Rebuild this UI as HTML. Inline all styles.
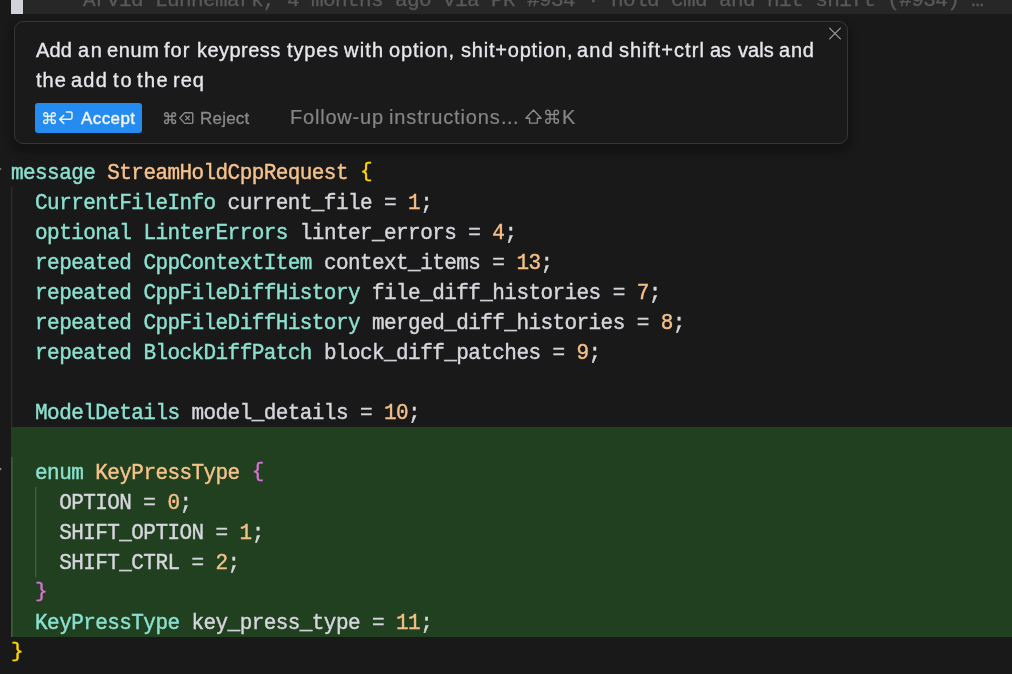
<!DOCTYPE html>
<html>
<head>
<meta charset="utf-8">
<style>
html,body{margin:0;padding:0;}
body{width:1012px;height:674px;overflow:hidden;background:#191919;position:relative;-webkit-font-smoothing:antialiased;font-family:"Liberation Sans",sans-serif;}
.abs{position:absolute;}
#band{left:11px;top:0;width:1001px;height:14px;background:#272727;}
#cursor{left:11px;top:0;width:12px;height:14px;background:#d2d2da;}
#blame{will-change:transform;left:83px;top:-11.4px;font-family:"Liberation Mono",monospace;font-size:21px;letter-spacing:-0.6px;-webkit-text-stroke:0.3px;line-height:24px;color:#5a5a5a;white-space:pre;}
#popup{left:14px;top:21px;width:832px;height:121px;border:1px solid #363636;border-radius:9px;background:#1a1a1a;box-sizing:content-box;box-shadow:0 5px 6px 4px rgba(0,0,0,0.22);}
.w{will-change:transform;position:absolute;white-space:pre;line-height:30px;font-family:"Liberation Sans",sans-serif;}
.m{font-size:20px;color:#e6e6ec;-webkit-text-stroke:0.35px;}
.g{font-size:20px;color:#858585;-webkit-text-stroke:0.2px;}
.b{font-size:16px;display:inline-block;transform:scaleX(1.06);transform-origin:0 0;}
#accept{left:35px;top:103px;width:107px;height:30px;background:#248cf0;border-radius:3px;}
.code{will-change:transform;font-family:"Liberation Mono",monospace;font-size:21px;letter-spacing:-0.57px;-webkit-text-stroke:0.4px;line-height:30px;white-space:pre;color:#d6d6dd;left:11.1px;}
.ln{height:30px;transform:scaleY(1.07);transform-origin:0 20.6px;}
.k{color:#8ce0d0;}
.t{color:#f6c28b;}
.n{color:#f4c088;}
.y{color:#ffd700;display:inline-block;transform:translateY(-1px) scaleY(0.91);}
.p{color:#da70d6;display:inline-block;transform:translateY(-1px) scaleY(0.91);}
#green{left:11px;top:427px;width:1001px;height:210px;background:#21401f;}
.guide{width:1px;background:#333;}
</style>
</head>
<body>
<div class="abs" id="band"></div>
<div class="abs" id="cursor"></div>
<div class="abs" id="blame">Arvid Lunnemark, 4 months ago via PR #934 · hold cmd and hit shift (#934) …</div>

<div class="abs" id="popup"></div>
<span class="w m" style="left:35.9px;top:34.7px;letter-spacing:0.20px">Add</span>
<span class="w m" style="left:77.9px;top:34.7px;letter-spacing:1.70px">an</span>
<span class="w m" style="left:106.5px;top:34.7px;letter-spacing:0.63px">enum</span>
<span class="w m" style="left:163.7px;top:34.7px;letter-spacing:1.05px">for</span>
<span class="w m" style="left:196.8px;top:34.7px;letter-spacing:0.46px">keypress</span>
<span class="w m" style="left:286.5px;top:34.7px;letter-spacing:0.88px">types</span>
<span class="w m" style="left:343.7px;top:34.7px;letter-spacing:1.20px">with</span>
<span class="w m" style="left:388.7px;top:34.7px;letter-spacing:0.85px">option,</span>
<span class="w m" style="left:460.8px;top:34.7px;letter-spacing:0.79px">shit+option,</span>
<span class="w m" style="left:577.4px;top:34.7px;letter-spacing:1.20px">and</span>
<span class="w m" style="left:619.3px;top:34.7px;letter-spacing:1.10px">shift+ctrl</span>
<span class="w m" style="left:709.5px;top:34.7px;letter-spacing:-0.20px">as</span>
<span class="w m" style="left:737.5px;top:34.7px;letter-spacing:0.03px">vals</span>
<span class="w m" style="left:778.9px;top:34.7px;letter-spacing:0.80px">and</span>

<span class="w m" style="left:36.0px;top:64.7px;letter-spacing:1.00px">the</span>
<span class="w m" style="left:70.5px;top:64.7px;letter-spacing:1.25px">add</span>
<span class="w m" style="left:113.0px;top:64.7px;letter-spacing:2.00px">to</span>
<span class="w m" style="left:137.3px;top:64.7px;letter-spacing:1.35px">the</span>
<span class="w m" style="left:173.4px;top:64.7px;letter-spacing:1.00px">req</span>

<div class="abs" id="accept"></div>
<span class="w b" style="color:#f2f2f2;left:81px;top:103.9px;letter-spacing:0.4px;-webkit-text-stroke:0.45px">Accept</span>
<span class="w b" style="color:#8a8a8a;left:200px;top:103.9px;letter-spacing:0.23px;-webkit-text-stroke:0.3px">Reject</span>

<span class="w g" style="left:290.4px;top:101.9px;letter-spacing:0.80px">Follow-up</span>
<span class="w g" style="left:389.4px;top:101.9px;letter-spacing:0.87px">instructions</span>
<span class="w g" style="left:500.9px;top:101.9px;letter-spacing:0.45px">...</span>
<span class="w g" style="left:562.0px;top:101.9px;letter-spacing:0.00px">K</span>


<div class="abs" id="green"></div>

<div class="abs code" style="top:159.1px;"><div class="ln"><span class="k">message</span> <span class="t">StreamHoldCppRequest</span> <span class="y">{</span></div><div class="ln">  <span class="k">CurrentFileInfo</span> current_file = <span class="n">1</span>;</div><div class="ln">  <span class="k">optional</span> <span class="k">LinterErrors</span> linter_errors = <span class="n">4</span>;</div><div class="ln">  <span class="k">repeated</span> <span class="k">CppContextItem</span> context_items = <span class="n">13</span>;</div><div class="ln">  <span class="k">repeated</span> <span class="k">CppFileDiffHistory</span> file_diff_histories = <span class="n">7</span>;</div><div class="ln">  <span class="k">repeated</span> <span class="k">CppFileDiffHistory</span> merged_diff_histories = <span class="n">8</span>;</div><div class="ln">  <span class="k">repeated</span> <span class="k">BlockDiffPatch</span> block_diff_patches = <span class="n">9</span>;</div><div class="ln"> </div><div class="ln">  <span class="k">ModelDetails</span> model_details = <span class="n">10</span>;</div><div class="ln"> </div><div class="ln">  <span class="k">enum</span> <span class="t">KeyPressType</span> <span class="p">{</span></div><div class="ln">    OPTION = <span class="n">0</span>;</div><div class="ln">    SHIFT_OPTION = <span class="n">1</span>;</div><div class="ln">    SHIFT_CTRL = <span class="n">2</span>;</div><div class="ln">  <span class="p">}</span></div><div class="ln">  <span class="k">KeyPressType</span> key_press_type = <span class="n">11</span>;</div><div class="ln"><span class="y">}</span></div></div>
<svg class="abs" style="left:0;top:0" width="1012" height="674" viewBox="0 0 1012 674" fill="none" stroke-linecap="round" stroke-linejoin="round">
<path d="M15 0a3 3 0 0 0-3 3v12a3 3 0 0 0 3 3 3 3 0 0 0 3-3 3 3 0 0 0-3-3H3a3 3 0 0 0-3 3 3 3 0 0 0 3 3 3 3 0 0 0 3-3V3a3 3 0 0 0-3-3 3 3 0 0 0-3 3 3 3 0 0 0 3 3h12a3 3 0 0 0 3-3 3 3 0 0 0-3-3z" transform="translate(43.70 112.70) scale(0.6444 0.6000)" fill="none" stroke="#f0f0f0" stroke-width="1.4" vector-effect="non-scaling-stroke"/>
<path d="M63.8 115.4L59.6 119.3L63.8 123.4M59.8 119.3H70.3a1.7 1.7 0 0 0 1.7-1.7V113.2a1.2 1.2 0 0 0-1.2-1.2H66.4" stroke="#f0f0f0" stroke-width="1.5"/>
<path d="M15 0a3 3 0 0 0-3 3v12a3 3 0 0 0 3 3 3 3 0 0 0 3-3 3 3 0 0 0-3-3H3a3 3 0 0 0-3 3 3 3 0 0 0 3 3 3 3 0 0 0 3-3V3a3 3 0 0 0-3-3 3 3 0 0 0-3 3 3 3 0 0 0 3 3h12a3 3 0 0 0 3-3 3 3 0 0 0-3-3z" transform="translate(164.60 112.70) scale(0.6111 0.6000)" fill="none" stroke="#8a8a8a" stroke-width="1.4" vector-effect="non-scaling-stroke"/>
<path d="M184.7 112.7H191.6a1.2 1.2 0 0 1 1.2 1.2V122.2a1.2 1.2 0 0 1-1.2 1.2H184.7L179.9 118.05Z" stroke="#8a8a8a" stroke-width="1.4"/>
<path d="M185.3 115.8L189.7 120.2M189.7 115.8L185.3 120.2" stroke="#8a8a8a" stroke-width="1.25" stroke-linecap="butt"/>
<path d="M533.5 110.1L541.1 118.2H537.4V123.1H529.6V118.2H525.9Z" stroke="#8a8a8a" stroke-width="1.4"/>
<path d="M15 0a3 3 0 0 0-3 3v12a3 3 0 0 0 3 3 3 3 0 0 0 3-3 3 3 0 0 0-3-3H3a3 3 0 0 0-3 3 3 3 0 0 0 3 3 3 3 0 0 0 3-3V3a3 3 0 0 0-3-3 3 3 0 0 0-3 3 3 3 0 0 0 3 3h12a3 3 0 0 0 3-3 3 3 0 0 0-3-3z" transform="translate(545.70 110.10) scale(0.7111 0.7333)" fill="none" stroke="#8a8a8a" stroke-width="1.4" vector-effect="non-scaling-stroke"/>
<path d="M829.6 28.1L840.4 38.9M840.4 28.1L829.6 38.9" stroke="#9c9c9c" stroke-width="1.2"/>
<rect x="11.1" y="187" width="1.2" height="240" fill="#303030" stroke="none"/>
<rect x="11.1" y="457" width="1.5" height="180" fill="#3f613d" stroke="none"/>
<rect x="35.1" y="487" width="1.3" height="90" fill="#3f613d" stroke="none"/>
<rect x="0" y="168" width="1.2" height="2" fill="#707070" stroke="none"/>
<rect x="0" y="468" width="1.2" height="2.2" fill="#8a8a8a" stroke="none"/>
</svg>
</body>
</html>
